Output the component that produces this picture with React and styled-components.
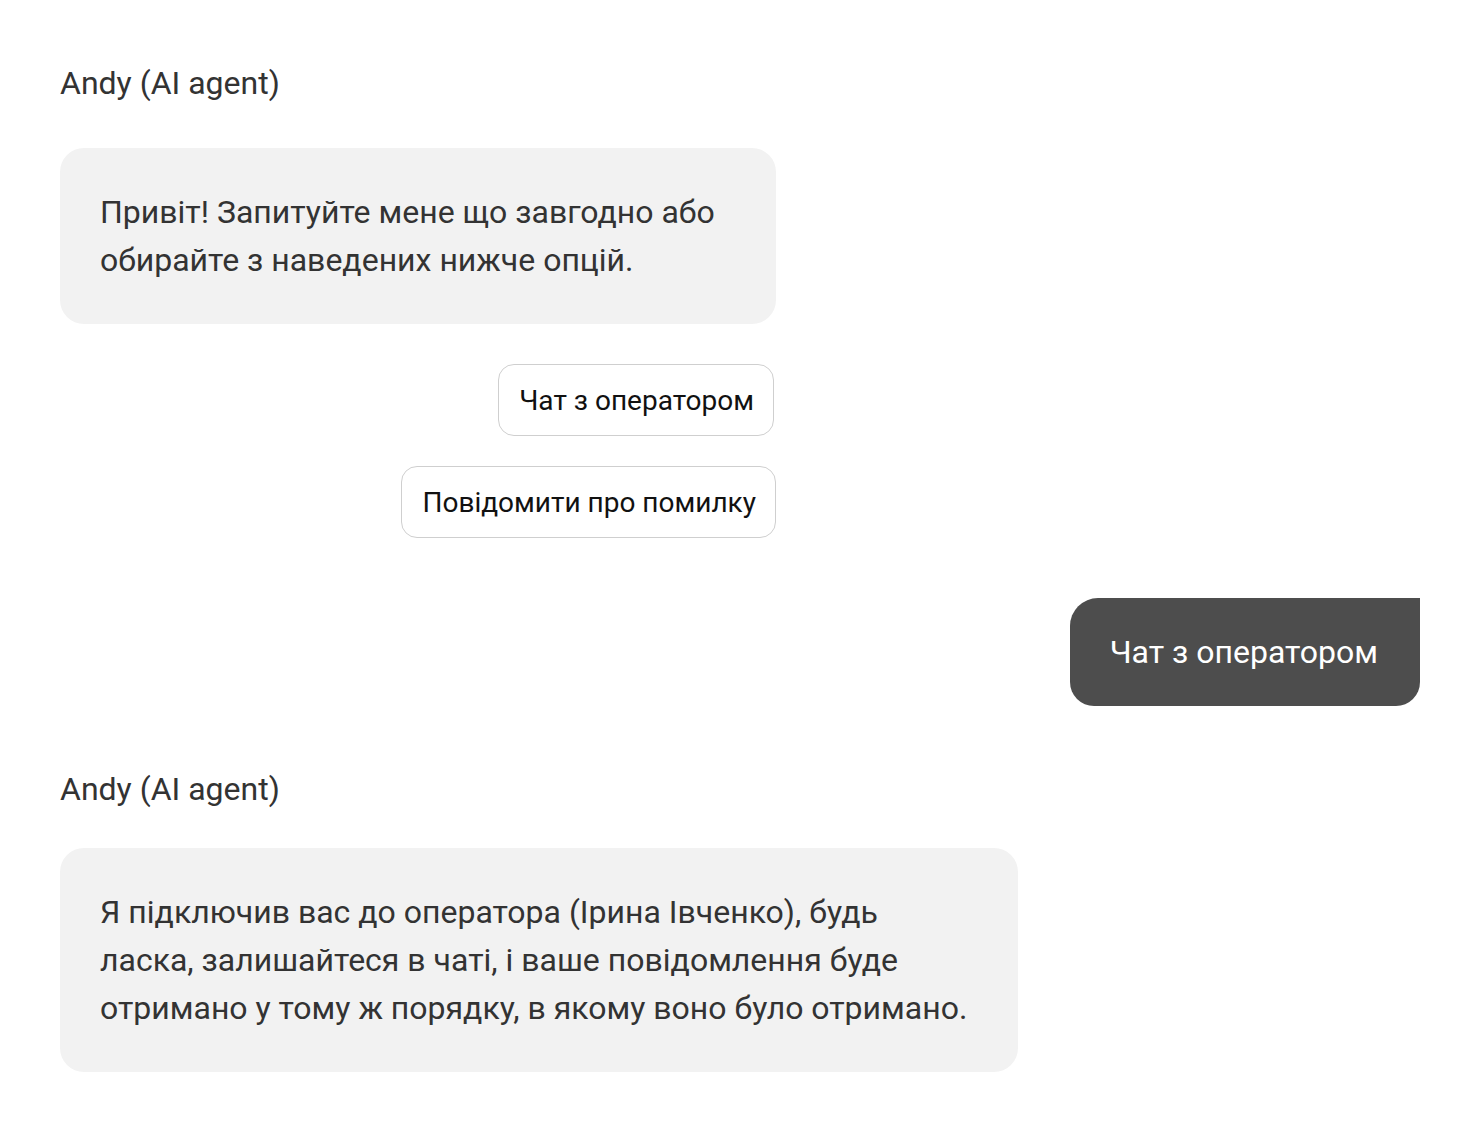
import styled, { createGlobalStyle } from 'styled-components';

const GlobalStyle = createGlobalStyle`
  html, body {
    margin: 0;
    padding: 0;
    background: #ffffff;
  }
  body {
    font-family: Roboto, "Noto Sans", "Liberation Sans", sans-serif;
    -webkit-font-smoothing: antialiased;
  }
`;

const Chat = styled.div`
  display: flex;
  flex-direction: column;
  padding: 59px 60px 40px;
`;

const AgentName = styled.div`
  font-size: 32px;
  line-height: 48px;
  color: #333333;
  margin-top: ${({ $first }) => ($first ? '0' : '59px')};
  margin-bottom: ${({ $gap }) => $gap}px;
`;

const Bubble = styled.div`
  box-sizing: border-box;
  width: ${({ $width }) => $width}px;
  padding: 40px;
  background: #f2f2f2;
  border-radius: 24px;
  font-size: 32px;
  line-height: 48px;
  color: #333333;
`;

const Options = styled.div`
  width: 716px;
  display: flex;
  flex-direction: column;
  align-items: flex-end;
  gap: 30px;
  margin-top: 40px;
`;

const OptionButton = styled.button`
  box-sizing: border-box;
  height: 72px;
  padding: 0 19px 0 20px;
  margin-right: ${({ $shift }) => $shift || 0}px;
  background: #ffffff;
  border: 1px solid #cfcfcf;
  border-radius: 16px;
  font-family: inherit;
  font-size: 28px;
  color: #111111;
  cursor: pointer;
`;

const UserBubble = styled.div`
  align-self: flex-end;
  margin-top: 60px;
  padding: 30px 42px 30px 40px;
  background: #4d4d4d;
  border-radius: 28px 0 24px 24px;
  font-size: 32px;
  line-height: 48px;
  color: #ffffff;
`;

export default function App() {
  return (
    <>
      <GlobalStyle />
      <Chat>
        <AgentName $first $gap={41}>Andy (AI agent)</AgentName>
        <Bubble $width={716}>
          Привіт! Запитуйте мене що завгодно або обирайте з наведених нижче опцій.
        </Bubble>
        <Options>
          <OptionButton $shift={2}>Чат з оператором</OptionButton>
          <OptionButton>Повідомити про помилку</OptionButton>
        </Options>

        <UserBubble>Чат з оператором</UserBubble>

        <AgentName $gap={35}>Andy (AI agent)</AgentName>
        <Bubble $width={958}>
          Я підключив вас до оператора (Ірина Івченко), будь ласка, залишайтеся в чаті, і ваше
          повідомлення буде отримано у тому ж порядку, в якому воно було отримано.
        </Bubble>
      </Chat>
    </>
  );
}
